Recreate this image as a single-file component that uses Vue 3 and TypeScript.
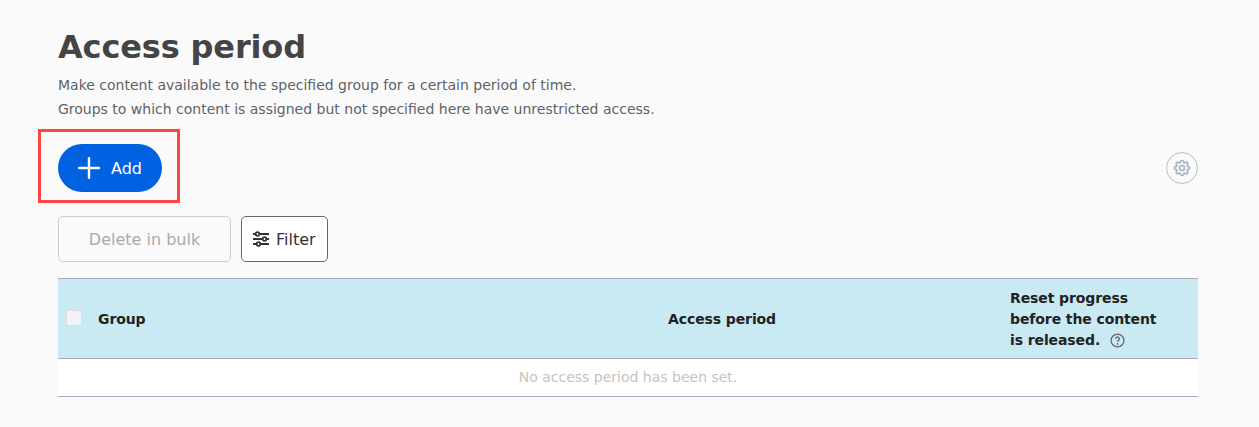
<script setup lang="ts">
const description = [
  'Make content available to the specified group for a certain period of time.',
  'Groups to which content is assigned but not specified here have unrestricted access.',
]
</script>

<template>
  <main class="page">
    <h1 class="title">Access period</h1>
    <p v-for="line in description" :key="line" class="desc">{{ line }}</p>

    <div class="add-row">
      <div class="highlight">
        <button class="add-btn" type="button">
          <svg width="22" height="22" viewBox="0 0 22 22" fill="none">
            <path d="M11 1v20M1 11h20" stroke="#fff" stroke-width="2.400" stroke-linecap="round" />
          </svg>
          <span>Add</span>
        </button>
      </div>
      <button class="gear-btn" type="button" aria-label="Settings">
        <svg width="20" height="20" viewBox="0 0 24 24" fill="none" stroke="#a8b4c6" stroke-width="2">
          <path d="M10.343 3.94c.09-.542.56-.94 1.11-.94h1.093c.55 0 1.02.398 1.11.94l.149.894c.07.424.384.764.78.93.398.164.855.142 1.205-.108l.737-.527a1.125 1.125 0 0 1 1.45.12l.773.774c.39.389.44 1.002.12 1.45l-.527.737c-.25.35-.272.806-.107 1.204.165.397.505.71.93.78l.893.15c.543.09.94.56.94 1.109v1.094c0 .55-.397 1.02-.94 1.11l-.893.149c-.425.07-.765.383-.93.78-.165.398-.143.854.107 1.204l.527.738c.32.447.269 1.06-.12 1.45l-.774.773a1.125 1.125 0 0 1-1.449.12l-.738-.527c-.35-.25-.806-.272-1.203-.107-.397.165-.71.505-.781.929l-.149.894c-.09.542-.56.94-1.11.94h-1.094c-.55 0-1.019-.398-1.11-.94l-.148-.894c-.071-.424-.384-.764-.781-.93-.398-.164-.854-.142-1.204.108l-.738.527c-.447.32-1.06.269-1.45-.12l-.773-.774a1.125 1.125 0 0 1-.12-1.45l.527-.737c.25-.35.273-.806.108-1.204-.165-.397-.506-.71-.93-.78l-.894-.15c-.542-.09-.94-.56-.94-1.109v-1.094c0-.55.398-1.02.94-1.11l.894-.149c.424-.07.765-.383.93-.78.165-.398.143-.854-.107-1.204l-.527-.738a1.125 1.125 0 0 1 .12-1.45l.773-.773a1.125 1.125 0 0 1 1.45-.12l.737.527c.35.25.807.272 1.204.107.397-.165.71-.505.78-.929l.15-.894Z" />
          <circle cx="12" cy="12" r="3" />
        </svg>
      </button>
    </div>

    <div class="actions">
      <button class="bulk-btn" type="button" disabled>Delete in bulk</button>
      <button class="filter-btn" type="button">
        <svg width="18" height="16" viewBox="0 0 18 16" fill="none" stroke="#333" stroke-width="1.800">
          <path d="M1 3h16M1 8h16M1 13h16" />
          <circle cx="5.500" cy="3" r="1.800" fill="#fff" />
          <circle cx="12.500" cy="8" r="1.800" fill="#fff" />
          <circle cx="6.500" cy="13" r="1.800" fill="#fff" />
        </svg>
        <span>Filter</span>
      </button>
    </div>

    <div class="table">
      <div class="head">
        <div class="cell-group">
          <span class="checkbox"></span>
          <span>Group</span>
        </div>
        <div class="cell-period">Access period</div>
        <div class="cell-reset">
          Reset progress<br />before the content<br />is released.
          <svg class="help" width="15" height="15" viewBox="0 0 14 14" fill="none">
            <circle cx="7" cy="7" r="6" stroke="#666" stroke-width="1.200" />
            <path d="M5.300 5.500a1.700 1.700 0 1 1 2.600 1.400c-.6.400-.9.700-.9 1.300" stroke="#666" stroke-width="1.200" />
            <circle cx="7" cy="10.200" r=".8" fill="#666" />
          </svg>
        </div>
      </div>
      <div class="empty">No access period has been set.</div>
    </div>
  </main>
</template>

<style scoped>
.page {
  box-sizing: border-box;
  height: 427px;
  padding: 27px 61px 0 58px;
  background: #fafafa;
  color: #333;
  font-family: "DejaVu Sans", Verdana, sans-serif;
  overflow: hidden;
}

.title {
  margin: 0 0 6px;
  font-size: 32px;
  line-height: 40px;
  font-weight: 700;
  letter-spacing: -0.15px;
  color: #444;
}

.desc {
  margin: 0;
  font-size: 14px;
  line-height: 24px;
  color: #5f6368;
}

.add-row {
  display: flex;
  align-items: center;
  justify-content: space-between;
  margin-top: 8px;
}

.highlight {
  box-sizing: border-box;
  width: 142px;
  height: 74px;
  margin-left: -20px;
  padding: 12px 0 0 17px;
  border: 3px solid #f44;
}

.add-btn {
  display: flex;
  align-items: center;
  gap: 11px;
  width: 104px;
  height: 48px;
  padding: 0 0 0 20px;
  border: 0;
  border-radius: 24px;
  background: #0062e0;
  color: #fff;
  font: inherit;
  font-size: 16px;
}

.gear-btn {
  display: flex;
  align-items: center;
  justify-content: center;
  width: 32px;
  height: 32px;
  margin-top: 4px;
  padding: 0;
  border: 1px solid #b5bec9;
  border-radius: 50%;
  background: #fafafa;
}

.actions {
  display: flex;
  gap: 10px;
  margin-top: 13px;
}

.bulk-btn {
  width: 173px;
  height: 46px;
  border: 1px solid #ccc;
  border-radius: 5px;
  background: #fafafa;
  color: #aaa;
  font: inherit;
  font-size: 16px;
}

.filter-btn {
  display: flex;
  align-items: center;
  gap: 6px;
  width: 87px;
  height: 46px;
  padding: 0 0 0 10px;
  border: 1px solid #666;
  border-radius: 5px;
  background: #fff;
  color: #333;
  font: inherit;
  font-size: 16px;
}

.table {
  margin-top: 16px;
  border-top: 1px solid #a9a9c0;
  border-bottom: 1px solid #a9a9c0;
}

.head {
  display: grid;
  grid-template-columns: 610px 342px 1fr;
  align-items: center;
  box-sizing: border-box;
  height: 80px;
  padding-top: 2px;
  border-bottom: 1px solid #a9a9c0;
  background: #c9eaf3;
  color: #222;
  font-size: 14px;
  font-weight: 700;
  letter-spacing: -0.1px;
  line-height: 21px;
}

.cell-group {
  display: flex;
  align-items: center;
  gap: 16px;
  padding-left: 8px;
}

.checkbox {
  width: 16px;
  height: 16px;
  margin-top: -4px;
  border: 1px solid #ddd;
  border-radius: 2px;
  background: #f2f2f2;
  box-sizing: border-box;
}

.help {
  margin-left: 5px;
  vertical-align: -3px;
}

.empty {
  height: 37px;
  background: #fff;
  color: #c4c4bc;
  font-size: 14px;
  line-height: 37px;
  text-align: center;
}
</style>
